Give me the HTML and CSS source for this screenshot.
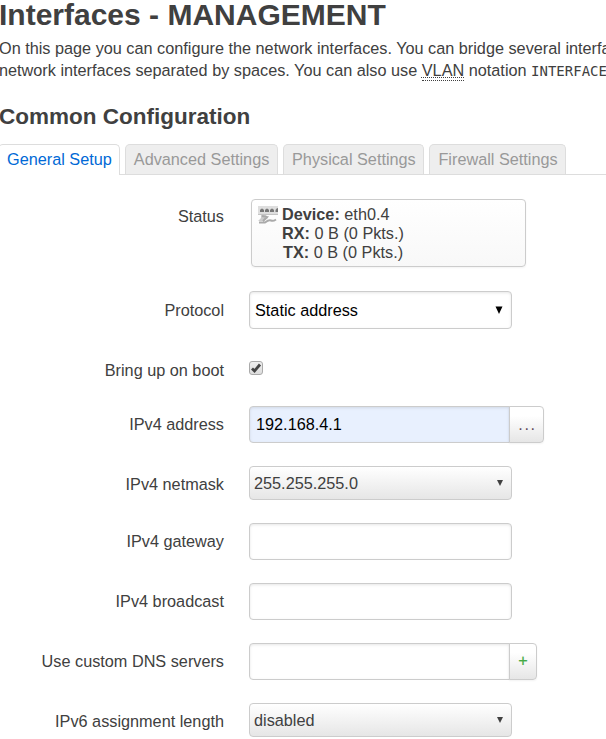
FILE: index.html
```html
<!DOCTYPE html>
<html lang="en">
<head>
<meta charset="utf-8">
<title>Interfaces - MANAGEMENT</title>
<link rel="stylesheet" href="styles.css">
</head>
<body>
<h2>Interfaces - MANAGEMENT</h2>
<p class="descr">On this page you can configure the network interfaces. You can bridge several interfa<br>network interfaces separated by spaces. You can also use <abbr>VLAN</abbr> notation <code>INTERFACE</code></p>
<h3>Common Configuration</h3>
<nav class="tabs">
  <a class="tab active">General Setup</a>
  <a class="tab">Advanced Settings</a>
  <a class="tab">Physical Settings</a>
  <a class="tab">Firewall Settings</a>
</nav>
<form>
  <div class="row status-row">
    <label>Status</label>
    <div class="status">
      <svg class="port" width="20" height="18" viewBox="0 0 20 18">
        <rect width="20" height="9" fill="#dedede"/>
        <path d="M2 4q2-3 4 0v2H2zM7 4q2-3 4 0v2H7zM12 4q2-3 4 0v2h-4zM17.500 4q1-2 2.500-2v4h-2.500z" fill="#777"/>
        <path d="M0 8h20v1H0z" fill="#c4c4c4"/>
        <path d="M3 9h5l2 3-4 3H0l3-3z" fill="#ccc"/>
        <path d="M4 10l5 1-4 4M1 16.500h6q4-3 6-2t5-1" fill="none" stroke="#aaa" stroke-width="2"/>
      </svg>
      <div class="stats">
        <div><b>Device:</b> eth0.4</div>
        <div><b>RX:</b> 0 B (0 Pkts.)</div>
        <div class="tx"><b>TX:</b> 0 B (0 Pkts.)</div>
      </div>
    </div>
  </div>
  <div class="row protocol-row">
    <label>Protocol</label>
    <div class="field protocol"><span>Static address</span><svg class="arrow" width="8" height="8" viewBox="0 0 8 8"><path d="M0.500 0.500h7L4 8z" fill="currentColor"/></svg></div>
  </div>
  <div class="row boot-row">
    <label>Bring up on boot</label>
    <span class="check"><svg width="12" height="12" viewBox="0 0 12 12"><path d="M2 6.500l2.500 2.500L10 2.500" fill="none" stroke="#444" stroke-width="2.800"/></svg></span>
  </div>
  <div class="row">
    <label>IPv4 address</label>
    <div class="field filled joined">192.168.4.1</div><span class="btn more">...</span>
  </div>
  <div class="row mask-row">
    <label>IPv4 netmask</label>
    <div class="field dropdown"><span>255.255.255.0</span><svg class="arrow" width="6" height="6" viewBox="0 0 6 6"><path d="M0 0h6L3 6z" fill="currentColor"/></svg></div>
  </div>
  <div class="row">
    <label>IPv4 gateway</label>
    <div class="field"></div>
  </div>
  <div class="row">
    <label>IPv4 broadcast</label>
    <div class="field"></div>
  </div>
  <div class="row">
    <label>Use custom DNS servers</label>
    <div class="field joined"></div><span class="btn add">+</span>
  </div>
  <div class="row last">
    <label>IPv6 assignment length</label>
    <div class="field dropdown"><span>disabled</span><svg class="arrow" width="6" height="6" viewBox="0 0 6 6"><path d="M0 0h6L3 6z" fill="currentColor"/></svg></div>
  </div>
</form>
</body>
</html>
```
FILE: styles.css
```css
* { box-sizing: border-box; }
html, body { overflow: hidden; }
body {
  margin: 0;
  width: 606px;
  height: 739px;
  background: #fff;
  color: #404040;
  font: 16.25px/22px "Liberation Sans", Arial, sans-serif;
}
h2 { margin: 0 0 0 -1px; height: 37px; font-size: 30px; line-height: 30px; white-space: nowrap; }
.descr { margin: 0 0 0 -1px; height: 63px; white-space: nowrap; }
abbr {
  border-bottom: 1px dotted #404040;
  padding-bottom: 1px;
  text-decoration: underline dotted 1px;
  text-underline-offset: 1px;
}
code { font: 14px "DejaVu Sans Mono", monospace; }
h3 { margin: 0 0 0 -1px; height: 44px; font-size: 22.5px; line-height: 33px; }
.tabs {
  display: flex;
  gap: 5px;
  height: 31px;
  border-bottom: 1px solid #ddd;
  margin-bottom: 24px;
}
.tab {
  height: 30px;
  padding: 0 7.700px 0 8px;
  border: 1px solid #ddd;
  border-bottom: 0;
  border-radius: 5px 5px 0 0;
  background: #eee;
  color: #999;
  line-height: 28px;
  white-space: nowrap;
}
.tab.active { height: 31px; margin-left: -2px; padding: 0 7px 0 8px; background: #fff; color: #0069d6; }
.row { display: flex; align-items: flex-start; height: 60px; }
.row label { width: 224px; margin-right: 25px; padding-top: 7px; text-align: right; white-space: nowrap; flex: none; }
.status-row { height: 92px; }
.status-row label { padding-top: 6px; }
.protocol-row label, .boot-row label { padding-top: 8px; }
.boot-row { height: 55px; }
.mask-row { height: 57px; }
.status {
  display: flex;
  width: 275px;
  height: 68px;
  margin-left: 2px;
  padding: 6px;
  border: 1px solid #ccc;
  border-radius: 4px;
  background: linear-gradient(#fff, #f8f8f8);
  box-shadow: 0 1px 2px rgba(0,0,0,.05);
  line-height: 19px;
}
.port { margin-right: 4px; }
.tx { padding-left: 1px; }
.stats { margin-top: -1px; }
.field {
  display: flex;
  align-items: center;
  width: 263px;
  height: 37px;
  padding: 0 6px 0 5px;
  border: 1px solid #ccc;
  border-radius: 4px;
  color: #000;
  box-shadow: inset 0 1px 3px rgba(0,0,0,.1);
}
.arrow { margin-left: auto; }
.protocol { height: 38px; }
.protocol .arrow { margin-right: 2px; }
.joined { width: 261px; border-radius: 4px 0 0 4px; }
.filled { padding-bottom: 1px; padding-left: 6px; background: #e8f0fe; }
.dropdown { height: 34px; padding: 0 5px 0 4px; color: #404040; background: linear-gradient(#fff, #e6e6e6); box-shadow: none; }
.dropdown .arrow { margin-right: 3px; }
.btn {
  height: 37px;
  margin-left: -1px;
  border: 1px solid #ccc;
  border-radius: 0 4px 4px 0;
  background: linear-gradient(#fff 25%, #e6e6e6);
  box-shadow: 0 1px 2px rgba(0,0,0,.05);
  line-height: 34px;
  text-align: center;
}
.more { width: 35px; padding-left: 2px; line-height: 34px; letter-spacing: 1.600px; color: #634a5a; }
.add { width: 28px; color: #4a4; -webkit-text-stroke: .2px #4a4; line-height: 33px; }
.check {
  width: 14px;
  height: 14px;
  margin-top: 10px;
  border: 1px solid #aaa;
  border-radius: 3px;
  background: linear-gradient(#eee, #ddd);
}
.check svg { display: block; }
```
